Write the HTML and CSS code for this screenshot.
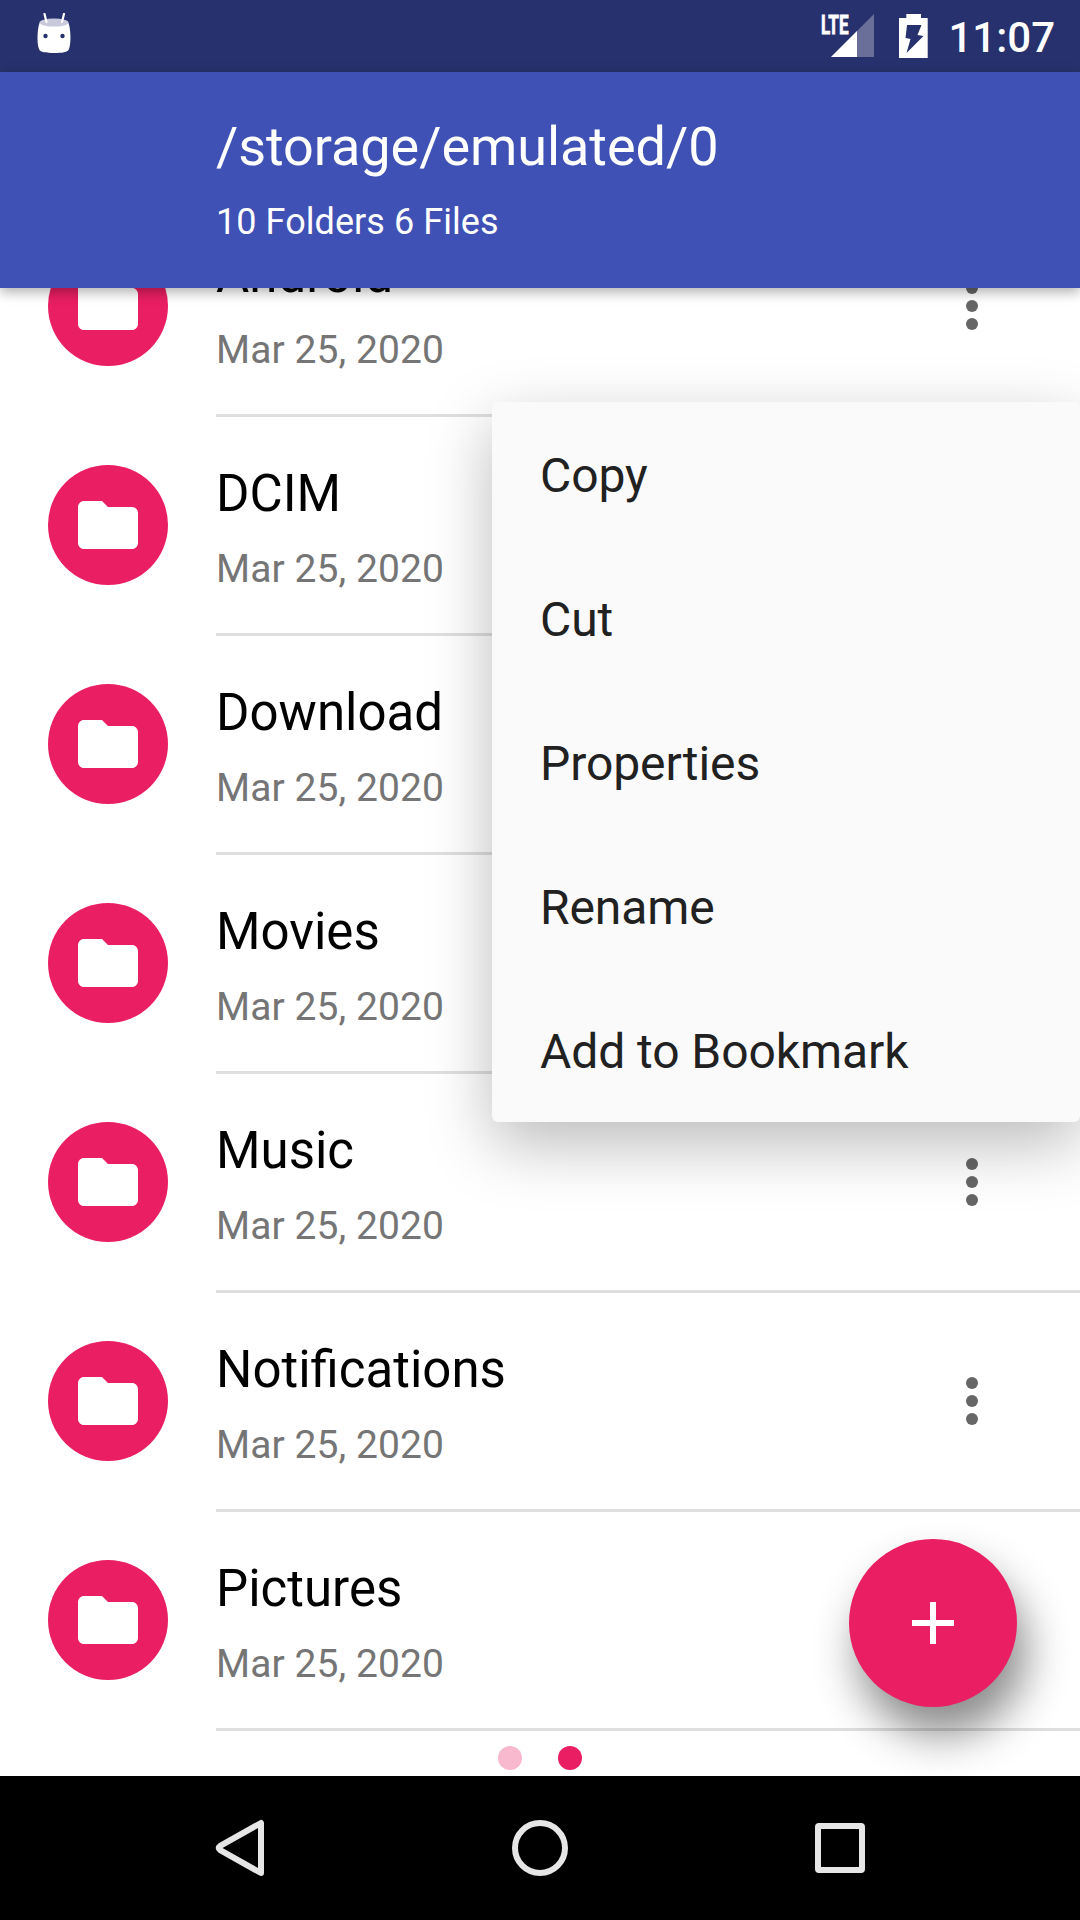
FILE: index.html
```html
<!DOCTYPE html>
<html lang="en">
<head>
<meta charset="utf-8">
<title>File manager</title>
<link rel="stylesheet" href="styles.css">
</head>
<body>
<svg class="sprite" aria-hidden="true">
  <symbol id="folder" viewBox="0 0 24 24"><path d="M10 4H4c-1.100 0-1.990.9-1.990 2L2 18c0 1.100.9 2 2 2h16c1.100 0 2-.9 2-2V8c0-1.100-.9-2-2-2h-8l-2-2z"/></symbol>
  <symbol id="more" viewBox="0 0 24 24"><circle cx="12" cy="6" r="2"/><circle cx="12" cy="12" r="2"/><circle cx="12" cy="18" r="2"/></symbol>
</svg>
<div class="screen">
  <header class="status-bar">
    <svg class="mascot" viewBox="0 0 36 42">
      <path class="white" d="M3.500 10C1.500 15 .500 30 3 36c1 3.500 7 4 15 4s14-.5 15-4c2.500-6 1.500-21-.5-26-3-5-26-5-29 0z"/>
      <ellipse class="lid" cx="18" cy="9.600" rx="14.500" ry="4"/>
      <path class="antenna" d="M8.500 1l2 8M28 1l-2 8"/>
      <circle class="eye" cx="9.500" cy="23" r="2.200"/><circle class="eye" cx="26.500" cy="23" r="2.200"/>
    </svg>
    <div class="status-icons">
      <svg class="signal" viewBox="0 0 54 44">
        <path class="weak" d="M53 1v43H10z"/>
        <path class="white" d="M36 18v26H10z"/>
        <text class="network" x="0" y="20.500" textLength="27.500" lengthAdjust="spacingAndGlyphs">LTE</text>
      </svg>
      <svg class="battery" viewBox="0 0 30 44">
        <path class="white" fill-rule="evenodd" d="M7.300 0h14.700v4h6.700v40H0V4h7.300zM8 11h14.500l-4 10 6 1L7.500 39l4-14-5-1z"/>
      </svg>
      <span class="clock">11:07</span>
    </div>
  </header>
  <div class="app-bar">
    <h1 class="path">/storage/emulated/0</h1>
    <p class="summary">10 Folders 6 Files</p>
  </div>
  <main class="content">
    <ul class="files">
      <li class="file"><span class="avatar"><svg class="icon"><use href="#folder"/></svg></span><div class="info"><div class="labels"><p class="name">Android</p><p class="date">Mar 25, 2020</p></div><svg class="more"><use href="#more"/></svg></div></li>
      <li class="file"><span class="avatar"><svg class="icon"><use href="#folder"/></svg></span><div class="info"><div class="labels"><p class="name">DCIM</p><p class="date">Mar 25, 2020</p></div></div></li>
      <li class="file"><span class="avatar"><svg class="icon"><use href="#folder"/></svg></span><div class="info"><div class="labels"><p class="name">Download</p><p class="date">Mar 25, 2020</p></div></div></li>
      <li class="file"><span class="avatar"><svg class="icon"><use href="#folder"/></svg></span><div class="info"><div class="labels"><p class="name">Movies</p><p class="date">Mar 25, 2020</p></div></div></li>
      <li class="file"><span class="avatar"><svg class="icon"><use href="#folder"/></svg></span><div class="info"><div class="labels"><p class="name">Music</p><p class="date">Mar 25, 2020</p></div><svg class="more"><use href="#more"/></svg></div></li>
      <li class="file"><span class="avatar"><svg class="icon"><use href="#folder"/></svg></span><div class="info"><div class="labels"><p class="name">Notifications</p><p class="date">Mar 25, 2020</p></div><svg class="more"><use href="#more"/></svg></div></li>
      <li class="file"><span class="avatar"><svg class="icon"><use href="#folder"/></svg></span><div class="info"><div class="labels"><p class="name">Pictures</p><p class="date">Mar 25, 2020</p></div></div></li>
    </ul>
    <div class="pager"><i class="dot"></i><i class="dot active"></i></div>
    <button class="fab" aria-label="Add"><svg class="plus" viewBox="0 0 42 42"><path d="M18 0h6v18h18v6H24v18h-6V24H0v-6h18z"/></svg></button>
    <ul class="menu">
      <li class="menu-item">Copy</li>
      <li class="menu-item">Cut</li>
      <li class="menu-item">Properties</li>
      <li class="menu-item">Rename</li>
      <li class="menu-item">Add to Bookmark</li>
    </ul>
  </main>
  <nav class="nav-bar">
    <svg class="nav-icon" viewBox="0 0 60 60"><path d="M51 5v50L10.200 32.200q-3-2.200 0-4.400z"/></svg>
    <svg class="nav-icon" viewBox="0 0 60 60"><circle cx="30" cy="30" r="25"/></svg>
    <svg class="nav-icon" viewBox="0 0 60 60"><rect x="8" y="8" width="44" height="44" rx="1"/></svg>
  </nav>
</div>
</body>
</html>
```
FILE: styles.css
```css
* { box-sizing: border-box; margin: 0; padding: 0; }
body { width: 1080px; height: 1920px; overflow: hidden; background: #fff; font-family: Roboto, "Liberation Sans", sans-serif; }
ul { list-style: none; }
svg { display: block; }
.sprite { display: none; }
.screen { display: flex; flex-direction: column; height: 1920px; }

.status-bar { display: flex; justify-content: space-between; height: 72px; padding: 13px 25px 0 36px; background: #27316d; }
.mascot { width: 36px; height: 42px; }
.white { fill: #fff; }
.lid { fill: #c9c9dc; }
.eye { fill: #27316d; }
.antenna { stroke: #fff; stroke-width: 2.200; stroke-linecap: round; fill: none; }
.status-icons { display: flex; align-items: flex-start; }
.signal { width: 54px; height: 44px; margin-right: 24px; overflow: visible; }
.weak { fill: #696f98; }
.network { fill: #fff; stroke: #fff; stroke-width: .8; font-size: 26px; font-weight: 700; }
.battery { width: 30px; height: 44px; margin: 1px 19px 0 0; }
.clock { color: #fff; font-size: 42px; line-height: 50px; font-weight: 500; }

.app-bar { position: relative; z-index: 1; height: 216px; padding: 43px 0 0 216px; background: #3f51b5; color: #fff; box-shadow: 0 4px 12px rgba(0, 0, 0, .32); }
.path { font-size: 54px; line-height: 64px; font-weight: 400; letter-spacing: -.06px; }
.summary { margin-top: 22px; font-size: 36px; line-height: 42px; letter-spacing: .06px; }

.content { position: relative; height: 1488px; overflow: hidden; }
.files { margin-top: -90px; }
.file { display: flex; height: 219px; padding-left: 48px; }
.avatar { display: flex; align-items: center; justify-content: center; width: 120px; height: 120px; margin: 48px 48px 0 0; border-radius: 50%; background: #e91e63; }
.icon { width: 72px; height: 72px; fill: #fff; }
.info { display: flex; flex: 1; justify-content: space-between; border-bottom: 3px solid #dfdfdf; }
.labels { padding-top: 47px; }
.name { font-size: 51px; line-height: 60px; color: #000; }
.date { margin-top: 22px; font-size: 39px; line-height: 46px; letter-spacing: .09px; color: #757575; }
.more { width: 72px; height: 72px; margin: 72px 72px 0 0; fill: #666; }

.pager { display: flex; justify-content: center; gap: 36px; padding-top: 15px; }
.dot { width: 24px; height: 24px; border-radius: 50%; background: #f8b9cf; }
.dot.active { background: #e91e63; }

.fab { position: absolute; right: 63px; bottom: 69px; display: flex; align-items: center; justify-content: center; width: 168px; height: 168px; border: 0; border-radius: 50%; background: #e91e63; box-shadow: 9px 28px 44px rgba(0, 0, 0, .46); }
.plus { width: 42px; height: 42px; fill: #fff; }

.menu { position: absolute; top: 114px; right: 0; width: 588px; height: 720px; border-radius: 6px; background: #fafafa; box-shadow: 0 22px 64px rgba(0, 0, 0, .27); }
.menu-item { height: 144px; padding: 1px 48px 0; font-size: 48px; line-height: 145px; letter-spacing: -.08px; color: #212121; }

.nav-bar { display: flex; justify-content: space-between; height: 144px; padding: 42px 210px; background: #000; }
.nav-icon { width: 60px; height: 60px; fill: none; stroke: #e6e6e6; stroke-width: 6; stroke-linejoin: round; }
```
